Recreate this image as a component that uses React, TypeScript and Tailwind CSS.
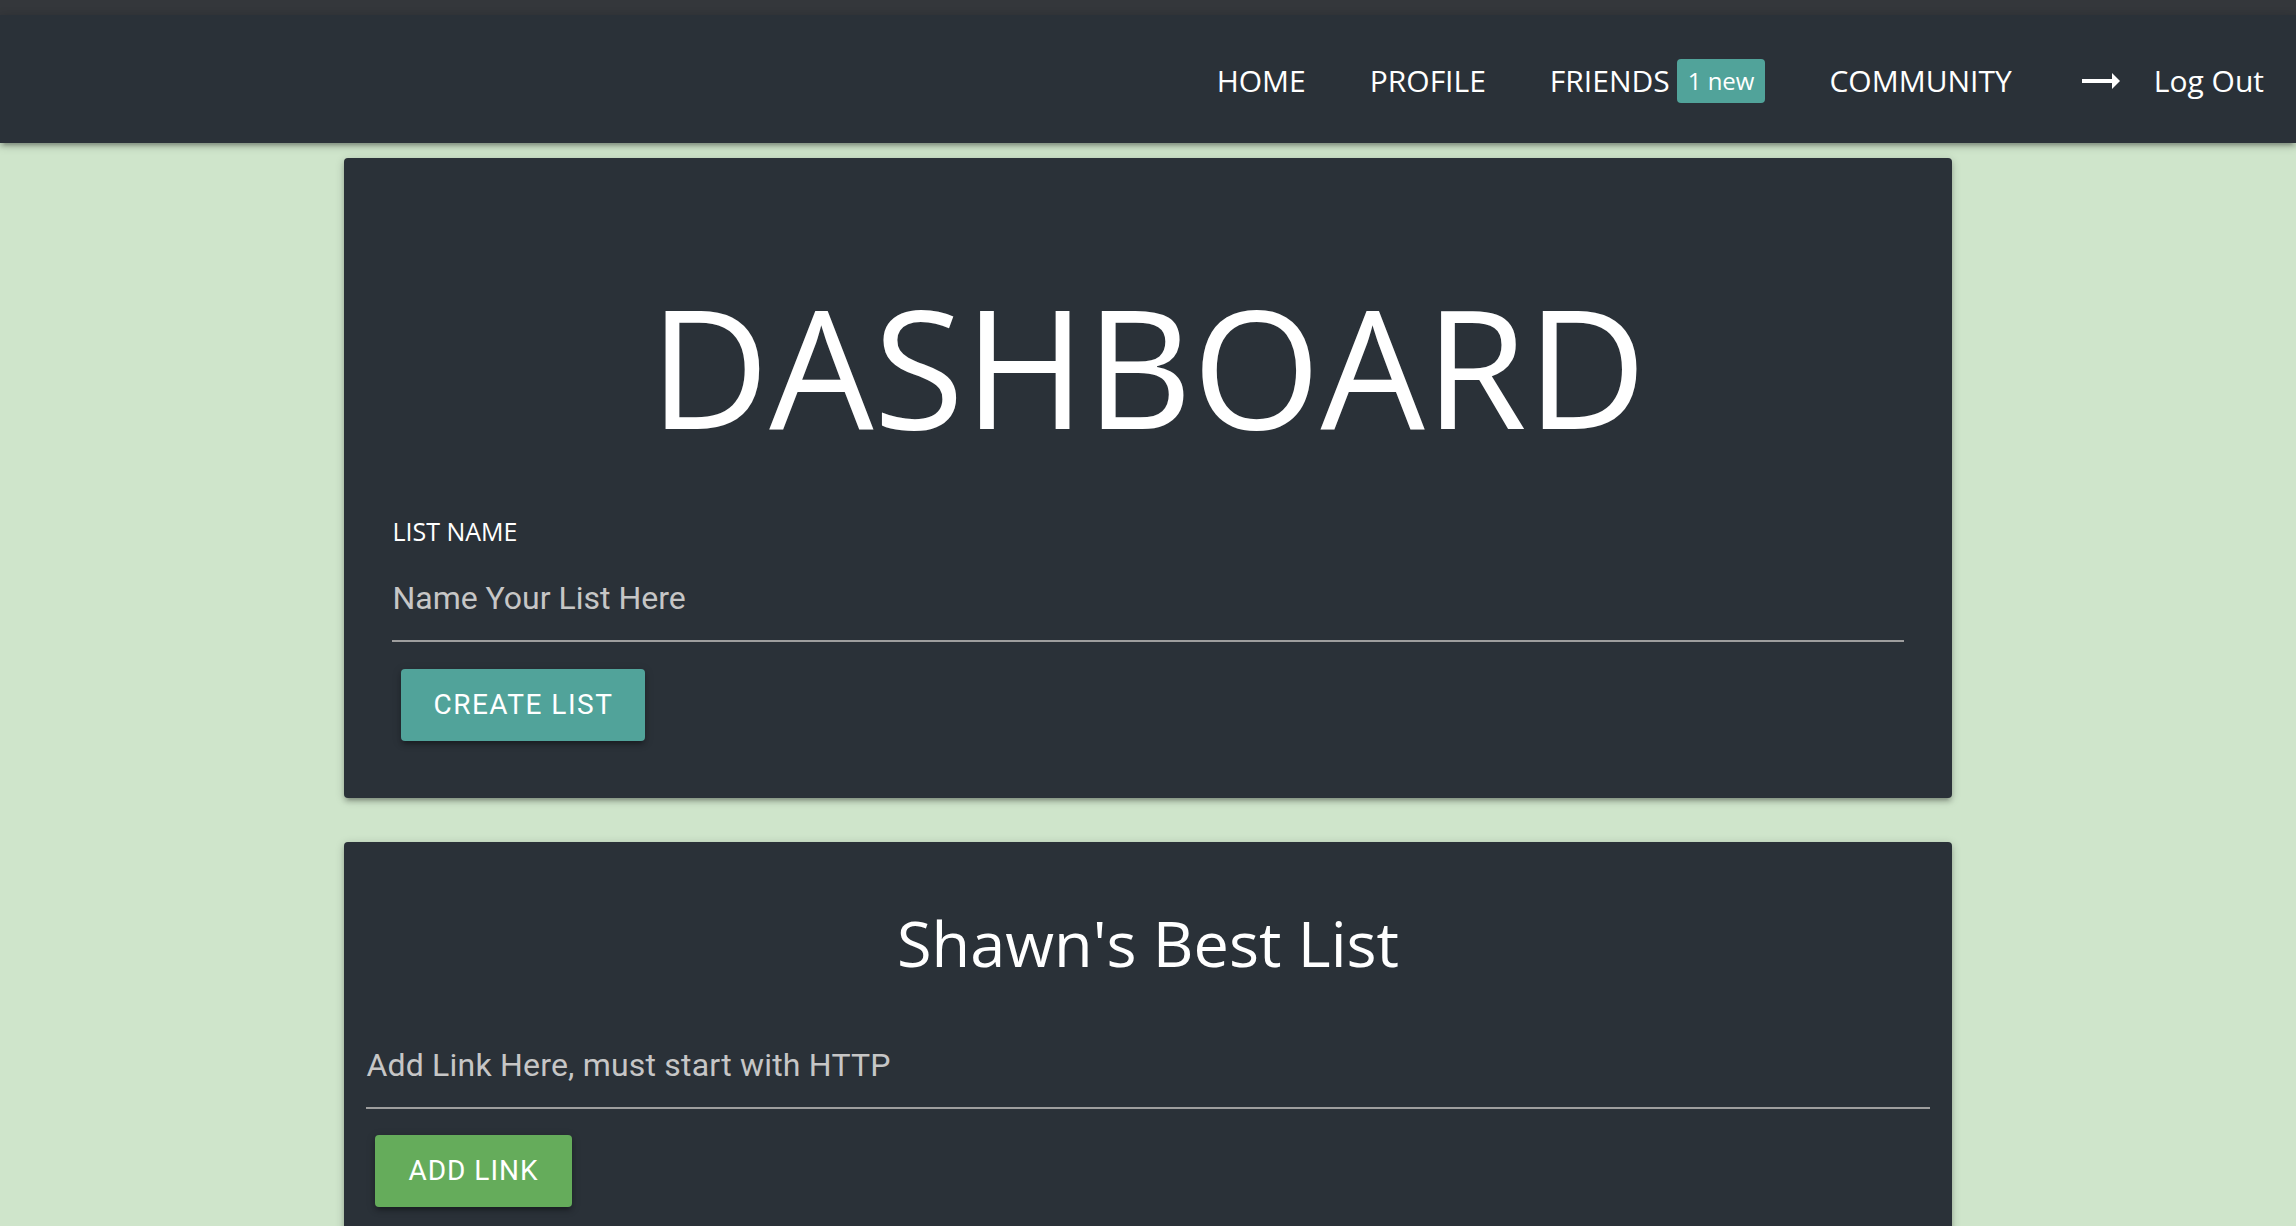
import React from "react";

const OPEN = "font-['Open_Sans','DejaVu_Sans',sans-serif]";
const ROBO = "font-['Roboto','Liberation_Sans',sans-serif]";

function NavItem({ children }: { children: React.ReactNode }) {
  return (
    <a className={`flex items-center px-[32px] text-[30px] leading-none text-white font-medium ${OPEN}`}>
      {children}
    </a>
  );
}

function FlatArrow() {
  return (
    <svg width="48" height="48" viewBox="0 0 24 24" fill="#ffffff" aria-hidden="true">
      <path d="M22 12l-4-4v3H3v2h15v3z" />
    </svg>
  );
}

export default function App() {
  return (
    <div className="min-h-screen w-full bg-[#cfe5cb]">
      <div className="h-[15px] w-full bg-[#34373b]" />
      <nav className="relative z-10 flex h-[128px] w-full items-center justify-end bg-[#2a3138] pr-0 pt-[3px] shadow-[0_4px_4px_0_rgba(0,0,0,0.14),0_6px_2px_-4px_rgba(0,0,0,0.12),0_2px_10px_0_rgba(0,0,0,0.2)]">
        <NavItem>HOME</NavItem>
        <NavItem>PROFILE</NavItem>
        <NavItem>
          FRIENDS
          <span className="ml-[7px] flex h-[44px] items-center rounded-[4px] bg-[#51a39a] px-[11px] text-[24px] font-normal text-white">
            1 new
          </span>
        </NavItem>
        <NavItem>COMMUNITY</NavItem>
        <NavItem>
          <span className="mr-[30px] flex">
            <FlatArrow />
          </span>
          Log Out
        </NavItem>
      </nav>

      <main className="mx-auto w-[70%] pt-[15px]">
        <section className="rounded-[4px] bg-[#2a3138] px-[48px] pt-[125px] pb-[57px] shadow-[0_4px_4px_0_rgba(0,0,0,0.14),0_6px_2px_-4px_rgba(0,0,0,0.12),0_2px_10px_0_rgba(0,0,0,0.2)]">
          <h1 className={`text-center text-[165px] leading-none font-normal text-white ${OPEN}`}>DASHBOARD</h1>
          <div className={`mt-[71px] text-[25px] leading-[25px] font-medium text-white ${OPEN}`}>LIST NAME</div>
          <div className={`mt-[38px] border-b-2 border-[#9e9e9e] pb-[26px] text-[32px] leading-none text-[#c6c6c6] ${ROBO}`}>
            Name Your List Here
          </div>
          <button className={`mt-[27px] ml-[9px] flex h-[72px] items-center rounded-[4px] bg-[#51a39a] px-[32px] text-[28px] tracking-[1.5px] text-white ${ROBO} shadow-[0_4px_4px_0_rgba(0,0,0,0.14),0_6px_2px_-4px_rgba(0,0,0,0.12),0_2px_10px_0_rgba(0,0,0,0.2)]`}>
            CREATE LIST
          </button>
        </section>

        <section className="mt-[44px] rounded-[4px] bg-[#2a3138] px-[22px] pt-[69px] pb-[200px] shadow-[0_4px_4px_0_rgba(0,0,0,0.14),0_6px_2px_-4px_rgba(0,0,0,0.12),0_2px_10px_0_rgba(0,0,0,0.2)]">
          <h2 className={`text-center text-[63px] leading-none font-medium text-white ${OPEN}`}>Shawn's Best List</h2>
          <div className={`mt-[75px] border-b-2 border-[#9e9e9e] pb-[26px] text-[32px] leading-none tracking-[0.2px] text-[#c6c6c6] ${ROBO}`}>
            Add Link Here, must start with HTTP
          </div>
          <button className={`mt-[26px] ml-[9px] flex h-[72px] items-center rounded-[4px] bg-[#65ac5b] px-[33px] text-[28px] tracking-[1px] text-white ${ROBO} shadow-[0_4px_4px_0_rgba(0,0,0,0.14),0_6px_2px_-4px_rgba(0,0,0,0.12),0_2px_10px_0_rgba(0,0,0,0.2)]`}>
            ADD LINK
          </button>
        </section>
      </main>
    </div>
  );
}
